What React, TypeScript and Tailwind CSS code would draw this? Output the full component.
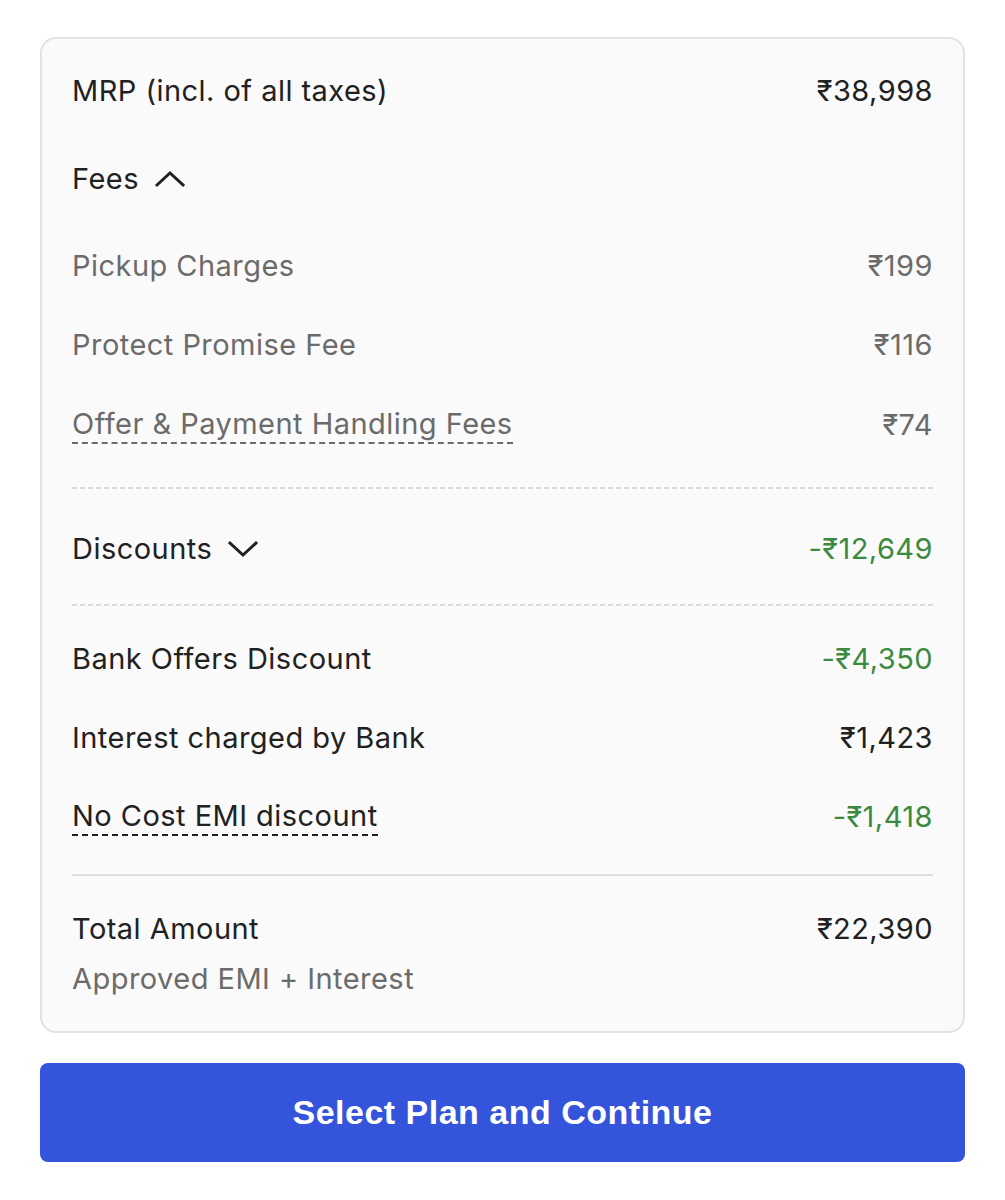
import React from "react"

const Chevron = ({ up }: { up?: boolean }) => (
  <svg width="30" height="18" viewBox="0 0 30 18" fill="none" className="ml-4">
    <path
      d={up ? "M2 15 L15 3 L28 15" : "M2 3 L15 15 L28 3"}
      stroke="#212121"
      strokeWidth="3"
      strokeLinecap="square"
    />
  </svg>
)

const Dashed = ({ className = "" }: { className?: string }) => (
  <div
    className={`h-[2px] w-full bg-[repeating-linear-gradient(to_right,#dadada_0_5px,transparent_5px_8px)] ${className}`}
  />
)

const Row = ({
  label,
  value,
  tone = "dark",
  className = "",
}: {
  label: React.ReactNode
  value?: string
  tone?: "dark" | "muted" | "green"
  className?: string
}) => {
  const labelColor = tone === "muted" ? "text-[#6b6b6b]" : "text-[#212121]"
  const valueColor =
    tone === "green"
      ? "text-[#3c8a40]"
      : tone === "muted"
        ? "text-[#6b6b6b]"
        : "text-[#212121]"
  return (
    <div className={`flex h-10 items-center justify-between ${className}`}>
      <div className={`flex items-center ${labelColor}`}>{label}</div>
      {value && <span className={valueColor}>{value}</span>}
    </div>
  )
}

export default function App() {
  return (
    <div className="min-h-screen bg-white px-10 pt-[37px] font-['Inter',sans-serif]">
      <div className="rounded-2xl border-2 border-[#e2e2e2] bg-[#fafafa] px-[30px] pb-8 pt-8 text-[29px] tracking-[0.016em]">
        <Row label="MRP (incl. of all taxes)" value="₹38,998" />
        <Row
          className="mt-12"
          label={
            <>
              Fees
              <Chevron up />
            </>
          }
        />
        <Row className="mt-[47px]" label="Pickup Charges" value="₹199" tone="muted" />
        <Row className="mt-[39px]" label="Protect Promise Fee" value="₹116" tone="muted" />
        <div className="mt-[40px] flex h-10 items-center justify-between text-[#6b6b6b]">
          <span className="border-b-2 border-dashed border-[#6b6b6b] leading-[36px]">
            Offer &amp; Payment Handling Fees
          </span>
          <span>₹74</span>
        </div>
        <Dashed className="mt-[42px]" />
        <div className="mt-[40px] flex h-10 items-center justify-between">
          <div className="flex items-center text-[#212121]">
            Discounts
            <Chevron />
          </div>
          <span className="text-[#3c8a40]">-₹12,649</span>
        </div>
        <Dashed className="mt-[35px]" />
        <Row className="mt-[33px]" label="Bank Offers Discount" value="-₹4,350" tone="green" />
        <div className="mt-[39px] flex h-10 items-center justify-between text-[#212121]">
          <span>Interest charged by Bank</span>
          <span>₹1,423</span>
        </div>
        <div className="mt-[39px] flex h-10 items-center justify-between">
          <span className="border-b-2 border-dashed border-[#212121] leading-[36px] text-[#212121]">
            No Cost EMI discount
          </span>
          <span className="text-[#3c8a40]">-₹1,418</span>
        </div>
        <div className="mt-[37px] h-[2px] w-full bg-[#dedede]" />
        <div className="mt-[33px] flex h-10 items-center justify-between text-[#212121]">
          <span>Total Amount</span>
          <span>₹22,390</span>
        </div>
        <div className="mt-[10px] flex h-10 items-center text-[#6b6b6b]">
          Approved EMI + Interest
        </div>
      </div>
      <button className="mt-[30px] flex h-[99px] w-full items-center justify-center rounded-lg bg-[#3454dc] font-['Liberation_Sans',Arial,sans-serif] text-[34px] font-bold tracking-[0.5px] text-white">
        Select Plan and Continue
      </button>
    </div>
  )
}
